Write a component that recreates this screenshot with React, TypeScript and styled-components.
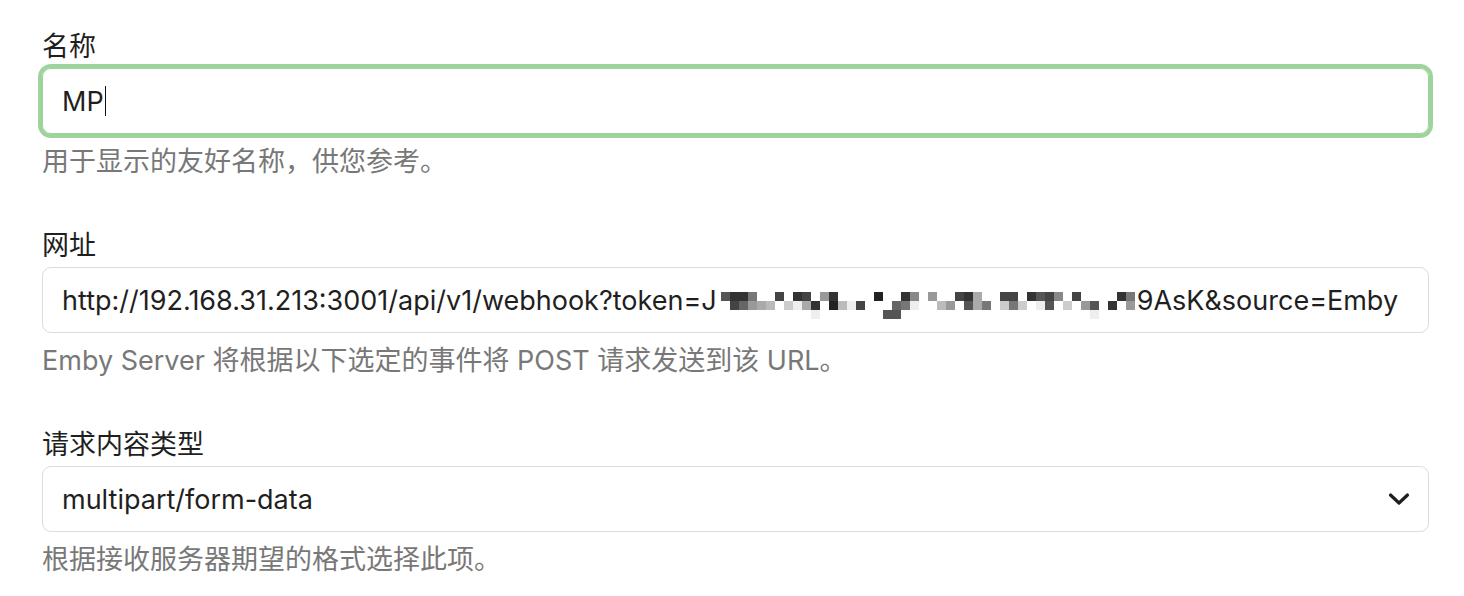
import React, { FC } from 'react';
import styled, { createGlobalStyle } from 'styled-components';

const GlobalStyle = createGlobalStyle`
  html, body {
    margin: 0;
    padding: 0;
    background: #ffffff;
  }
  body {
    font-family: Inter, "Noto Sans CJK SC", "Noto Sans", sans-serif;
    color: #1f1f1f;
  }
`;

const Page = styled.div`
  padding: 31px 35px 0 42px;
  display: flex;
  flex-direction: column;
  gap: 52px;
`;

const Field = styled.div`
  display: flex;
  flex-direction: column;
`;

const Label = styled.label`
  font-size: 27px;
  line-height: 32px;
  color: #1f1f1f;
  margin-bottom: 5px;
`;

const Hint = styled.div`
  font-size: 27px;
  line-height: 32px;
  color: #787878;
  margin-top: 12px;
`;

const Box = styled.div<{ $focused?: boolean }>`
  box-sizing: border-box;
  height: 66px;
  display: flex;
  align-items: center;
  padding: 0 18px 0 19px;
  border: 1px solid ${(p) => (p.$focused ? '#9dd49b' : '#dcdcdc')};
  border-radius: 9px;
  box-shadow: ${(p) => (p.$focused ? '0 0 0 4px #9dd49b' : 'none')};
  font-size: 27px;
  color: #1f1f1f;
  white-space: nowrap;
  overflow: hidden;
`;

const Value = styled.span`
  flex: 1;
  display: flex;
  align-items: center;
`;

const Caret = styled.span`
  display: inline-block;
  width: 1.5px;
  height: 30px;
  background: #111;
  margin-left: 1px;
`;

const Mosaic = styled.span`
  display: inline-grid;
  grid-template-columns: repeat(46, 9px);
  grid-template-rows: repeat(3, 9px);
  align-self: center;
  margin: 10px 2px 0 4px;
`;

const Cell = styled.span<{ $c: string }>`
  background: ${(p) => p.$c};
`;

const Chevron = styled.svg`
  width: 22px;
  height: 14px;
  flex-shrink: 0;
`;

// blurred part of the token: [top, middle, bottom]
const cols: (string | null)[][] = [
  ['#555', null, null],
  ['#333', '#444', null],
  ['#333', '#666', null],
  ['#777', '#999', null],
  [null, '#aaa', null],
  [null, '#bbb', null],
  ['#444', null, null],
  [null, '#ccc', null],
  ['#333', '#eee', null],
  ['#444', '#aaa', null],
  [null, '#333', '#eee'],
  ['#999', null, null],
  ['#333', '#222', null],
  [null, '#bbb', null],
  [null, '#eee', null],
  [null, '#444', null],
  [null, null, null],
  ['#222', null, null],
  [null, null, '#555'],
  [null, '#666', '#555'],
  ['#333', '#777', null],
  ['#888', '#eee', null],
  [null, null, null],
  ['#999', null, null],
  [null, '#bbb', null],
  [null, '#999', null],
  ['#444', null, null],
  ['#333', '#555', null],
  ['#aaa', '#aaa', null],
  [null, '#777', null],
  [null, null, null],
  ['#444', '#ccc', null],
  ['#444', '#777', null],
  [null, '#ccc', null],
  ['#333', null, null],
  ['#555', '#eee', null],
  ['#444', '#555', null],
  ['#888', null, null],
  [null, '#ccc', null],
  ['#444', null, null],
  [null, '#999', null],
  [null, '#555', '#eee'],
  [null, null, null],
  [null, '#333', null],
  ['#333', null, null],
  ['#777', '#999', null],
];

const TokenBlur: FC = () => (
  <Mosaic>
    {[0, 1, 2].map((row) =>
      cols.map((c, i) => <Cell key={`${row}-${i}`} $c={c[row] || 'transparent'} />)
    )}
  </Mosaic>
);

export default function App() {
  return (
    <>
      <GlobalStyle />
      <Page>
        <Field>
          <Label>名称</Label>
          <Box $focused>
            <Value>
              MP
              <Caret />
            </Value>
          </Box>
          <Hint>用于显示的友好名称，供您参考。</Hint>
        </Field>

        <Field>
          <Label>网址</Label>
          <Box>
            <Value>
              http://192.168.31.213:3001/api/v1/webhook?token=J
              <TokenBlur />
              9AsK&amp;source=Emby
            </Value>
          </Box>
          <Hint>Emby Server 将根据以下选定的事件将 POST 请求发送到该 URL。</Hint>
        </Field>

        <Field>
          <Label>请求内容类型</Label>
          <Box>
            <Value>multipart/form-data</Value>
            <Chevron viewBox="0 0 22 14">
              <polyline
                points="2.5,3 11,11 19.5,3"
                fill="none"
                stroke="#1f1f1f"
                strokeWidth="3.2"
                strokeLinecap="round"
                strokeLinejoin="round"
              />
            </Chevron>
          </Box>
          <Hint>根据接收服务器期望的格式选择此项。</Hint>
        </Field>
      </Page>
    </>
  );
}
